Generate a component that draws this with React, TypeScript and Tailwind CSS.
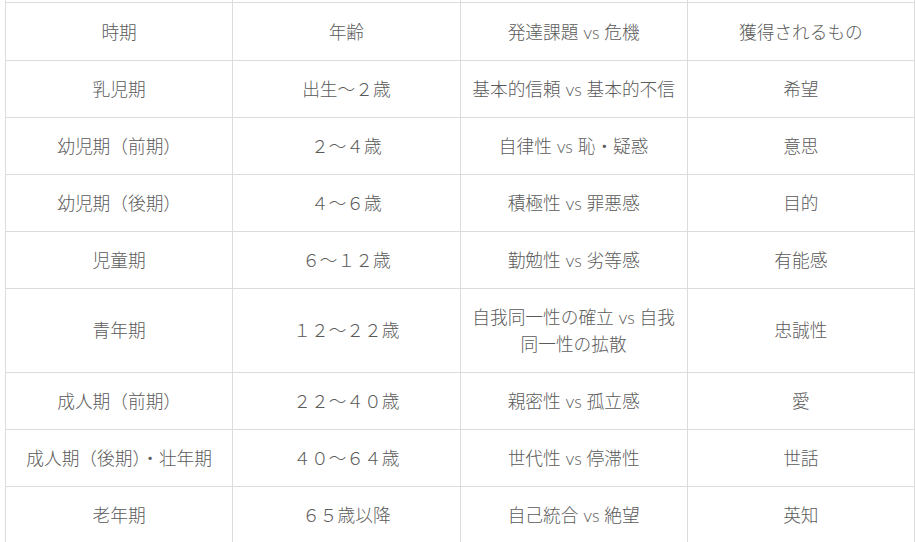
const rows: [string, string, React.ReactNode, string][] = [
  ["乳児期", "出生～２歳", "基本的信頼 vs 基本的不信", "希望"],
  ["幼児期（前期）", "２～４歳", "自律性 vs 恥・疑惑", "意思"],
  ["幼児期（後期）", "４～６歳", "積極性 vs 罪悪感", "目的"],
  ["児童期", "６～１２歳", "勤勉性 vs 劣等感", "有能感"],
  [
    "青年期",
    "１２～２２歳",
    <>
      自我同一性の確立 vs 自我
      <br />
      同一性の拡散
    </>,
    "忠誠性",
  ],
  ["成人期（前期）", "２２～４０歳", "親密性 vs 孤立感", "愛"],
  ["成人期（後期）・壮年期", "４０～６４歳", "世代性 vs 停滞性", "世話"],
  ["老年期", "６５歳以降", "自己統合 vs 絶望", "英知"],
];

const cell =
  "border border-[#dcdcdc] px-1 pt-[15px] pb-[14px] text-center align-middle font-light";

export default function App() {
  return (
    <div
      className="h-[542px] w-[915px] overflow-hidden bg-white pl-[5px] text-[17.7px] leading-[27px] text-[#5a5a5a]"
      style={{ fontFamily: 'Lato, "Noto Sans CJK JP", sans-serif' }}
    >
      <table className="w-[910px] table-fixed border-collapse">
        <tbody>
          <tr>
            {[0, 1, 2, 3].map((i) => (
              <td key={i} className="h-[2px] border-x border-[#dcdcdc] p-0" />
            ))}
          </tr>
          <tr>
            <th className={cell + " !pt-[16px]"}>時期</th>
            <th className={cell + " !pt-[16px]"}>年齢</th>
            <th className={cell + " !pt-[16px]"}>発達課題 vs 危機</th>
            <th className={cell + " !pt-[16px]"}>獲得されるもの</th>
          </tr>
          {rows.map((r, i) => (
            <tr key={i}>
              {r.map((c, j) => (
                <td
                  key={j}
                  className={i === rows.length - 1 ? cell + " !pb-[13px]" : cell}
                >
                  {c}
                </td>
              ))}
            </tr>
          ))}
        </tbody>
      </table>
    </div>
  );
}
